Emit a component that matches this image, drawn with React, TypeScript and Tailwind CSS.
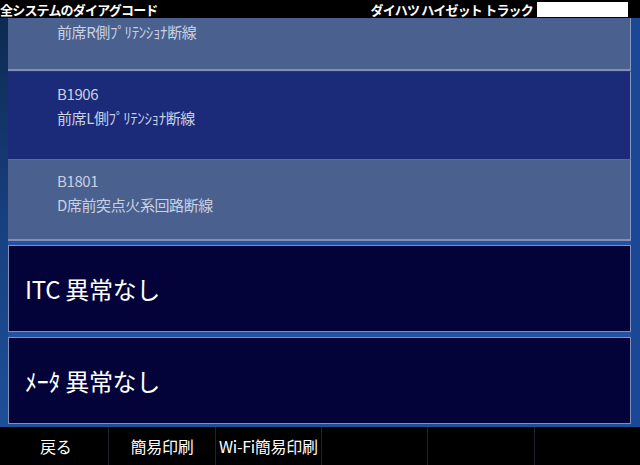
import React from 'react'

const font = { fontFamily: '"Noto Sans CJK JP", "Noto Sans", sans-serif' }

function CodeRow({ code, text, dark, className }: { code?: string; text: string; dark?: boolean; className: string }) {
  return (
    <div
      className={`${className} ${
        dark ? 'bg-[#1c2b79]' : 'bg-[#4a6190]'
      } border-r border-[#8a9ac0] pl-[49px] text-[15px] leading-[24px] tracking-[-0.4px] text-[#c9d0e0]`}
    >
      {code && <div>{code}</div>}
      <div>{text}</div>
    </div>
  )
}

function StatusBox({ text }: { text: string }) {
  return (
    <div className="h-[87px] bg-[#03033a] border border-[#7f8fb5] flex items-center pl-[16px] text-[24px] tracking-[-0.3px] text-white">
      {text}
    </div>
  )
}

export default function App() {
  const buttons = ['戻る', '簡易印刷', 'Wi-Fi簡易印刷', '', '', '']
  return (
    <div className="w-[640px] h-[465px] bg-black overflow-hidden flex flex-col" style={font}>
      <div className="h-[18px] flex items-center justify-between text-white text-[13px] font-bold leading-none tracking-[-0.8px]">
        <span>全システムのダイアグコード</span>
        <div className="flex items-center">
          <span className="mr-[4px]">ダイハツ ハイゼット トラック</span>
          <div className="w-[91px] h-[15px] bg-white mr-[12px]" />
        </div>
      </div>
      <div className="flex-1 flex bg-gradient-to-b from-[#0e2a50] via-[#174080] to-[#1d4f98]">
        <div className="w-[8px]" />
        <div className="flex-1 flex flex-col">
          <CodeRow text="前席R側ﾌﾟﾘﾃﾝｼｮﾅ断線" className="h-[53px] pt-[2px] border-b-2 border-b-[#7f8fb8]" />
          <CodeRow dark code="B1906" text="前席L側ﾌﾟﾘﾃﾝｼｮﾅ断線" className="h-[88px] pt-[10px] border-t border-t-[#26357f]" />
          <CodeRow code="B1801" text="D席前突点火系回路断線" className="h-[82px] pt-[9px] border-t border-t-[#5a6e9a] border-b-2 border-b-[#8090b8]" />
          <div className="h-[4px] bg-[#2452a0]" />
          <StatusBox text="ITC 異常なし" />
          <div className="h-[5px] bg-[#2452a0]" />
          <StatusBox text="ﾒｰﾀ 異常なし" />
        </div>
        <div className="w-[9px] bg-[#1a4896]" />
      </div>
      <div className="h-[38px] flex pl-[3px] bg-black">
        {buttons.map((b, i) => (
          <div
            key={i}
            className="flex-1 flex items-center justify-center text-white text-[16px] tracking-[-0.3px] border-r border-[#1c2230] last:border-r-0"
          >
            {b}
          </div>
        ))}
      </div>
    </div>
  )
}
